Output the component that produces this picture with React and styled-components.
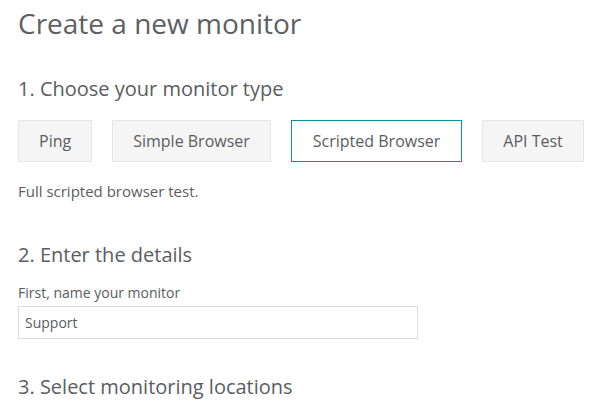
import { useState } from 'react';
import styled, { createGlobalStyle } from 'styled-components';

const GlobalStyle = createGlobalStyle`
  body {
    margin: 0;
    background: #fff;
    font-family: "Open Sans", sans-serif;
    color: #5b5d60;
  }
`;

const types = [
  { name: 'Ping', desc: 'Simple ping check.' },
  { name: 'Simple Browser', desc: 'Simple browser check.' },
  { name: 'Scripted Browser', desc: 'Full scripted browser test.' },
  { name: 'API Test', desc: 'API test.' },
];

export default function App() {
  const [selected, setSelected] = useState(2);
  const [name, setName] = useState('Support');

  return (
    <>
      <GlobalStyle />
      <Page>
        <Title>Create a new monitor</Title>

        <Section $gap={32}>
          <Heading>1. Choose your monitor type</Heading>
          <TypeRow>
            {types.map((t, i) => (
              <TypeButton key={t.name} $active={i === selected} onClick={() => setSelected(i)}>
                {t.name}
              </TypeButton>
            ))}
          </TypeRow>
          <Description>{types[selected].desc}</Description>
        </Section>

        <Section $gap={40}>
          <Heading>2. Enter the details</Heading>
          <Label htmlFor="monitor-name">First, name your monitor</Label>
          <TextInput id="monitor-name" value={name} onChange={(e) => setName(e.target.value)} />
        </Section>

        <Section $gap={34}>
          <Heading>3. Select monitoring locations</Heading>
        </Section>
      </Page>
    </>
  );
}

const Page = styled.div`
  padding: 0 18px;
`;

const Title = styled.h1`
  margin: 0;
  padding-top: 3px;
  font-size: 28px;
  font-weight: 400;
  line-height: 40px;
  color: #5e6063;
`;

const Section = styled.div`
  display: flex;
  flex-direction: column;
  align-items: flex-start;
  margin-top: ${(p) => p.$gap}px;
`;

const Heading = styled.h2`
  margin: 0;
  font-size: 20px;
  font-weight: 400;
  line-height: 28px;
`;

const TypeRow = styled.div`
  display: flex;
  gap: 20px;
  margin-top: 17px;
`;

const TypeButton = styled.button`
  flex-shrink: 0;
  height: 42px;
  padding: 0 ${(p) => (p.$active ? 21 : 20)}px;
  font-family: "Open Sans", sans-serif;
  font-size: 16px;
  white-space: nowrap;
  color: #5b5d60;
  background: ${(p) => (p.$active ? '#fff' : '#f5f5f5')};
  border: 1px solid ${(p) => (p.$active ? '#00959a' : '#e6e6e6')};
  cursor: pointer;
`;

const Description = styled.p`
  margin: 19px 0 0;
  font-size: 15px;
  line-height: 20px;
`;

const Label = styled.label`
  margin-top: 15px;
  font-size: 14px;
  line-height: 18px;
`;

const TextInput = styled.input`
  box-sizing: border-box;
  width: 400px;
  height: 33px;
  margin-top: 4px;
  padding: 0 6px;
  font-family: "Open Sans", sans-serif;
  font-size: 14px;
  color: #5b5d60;
  border: 1px solid #dcdcdc;
  outline: none;
`;
